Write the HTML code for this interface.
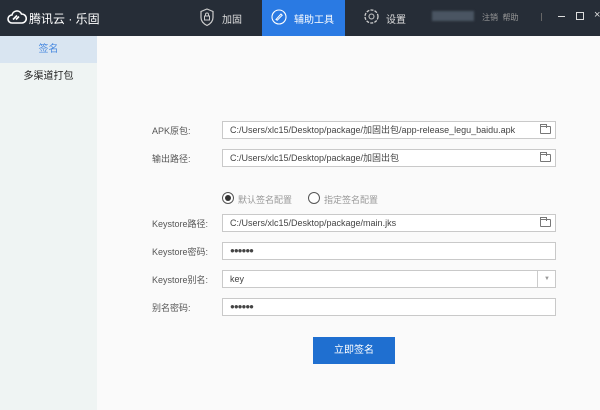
<!DOCTYPE html>
<html><head><meta charset="utf-8"><style>
*{margin:0;padding:0;box-sizing:border-box}
body{width:600px;height:410px;overflow:hidden;background:#fafafa;font-family:"Liberation Sans","Noto Sans CJK SC",sans-serif;position:relative}
.top{position:absolute;left:0;top:0;width:600px;height:36px;background:#262d37;color:#fff}
.a{position:absolute}
.side{position:absolute;left:0;top:36px;width:97px;height:374px;background:#eff4f3}
.lbl{position:absolute;left:152px;font-size:9px;color:#555}
.in{position:absolute;left:222px;width:334px;height:18px;border:1px solid #c9c9c9;background:#fff;font-size:9px;color:#444;padding-left:7px;line-height:16px}
.fold{position:absolute;right:4px;top:4px;width:11px;height:8px;border:1px solid #777;border-radius:1px}
.fold:before{content:"";position:absolute;left:-1px;top:-3px;width:5px;height:3px;border:1px solid #777;border-bottom:none}
</style></head><body>
<div class="top">
 <svg class="a" style="left:7px;top:10px" width="20" height="14" viewBox="0 0 20 14"><path d="M5 13a4 4 0 0 1 0-8a5 5 0 0 1 9.5-1a4.5 4.5 0 0 1 0.5 9z M6 9.5l4-4 M9 9.5l3-3" fill="none" stroke="#fff" stroke-width="1.6"/></svg>
 <div class="a" style="left:29px;top:10px;font-size:12px">腾讯云 · 乐固</div>
 <svg class="a" style="left:199px;top:8px" width="16" height="19" viewBox="0 0 16 19"><path d="M8 1l6 2.5v6c0 4-3 6.5-6 8c-3-1.5-6-4-6-8v-6z" fill="none" stroke="#ccc" stroke-width="1.2"/><rect x="5.5" y="8" width="5" height="4" fill="none" stroke="#ccc"/><path d="M6.5 8v-1.5a1.5 1.5 0 0 1 3 0v1.5" fill="none" stroke="#ccc"/></svg>
 <div class="a" style="left:222px;top:11px;font-size:10px;color:#ddd">加固</div>
 <div class="a" style="left:262px;top:0;width:83px;height:36px;background:#2a7ae3"></div>
 <svg class="a" style="left:271px;top:9px" width="16" height="16" viewBox="0 0 16 16"><circle cx="8" cy="8" r="7" fill="none" stroke="#fff" stroke-width="1.1"/><path d="M5 10.5l5-5.5 1.2 1.2-5 5z" fill="none" stroke="#fff"/></svg>
 <div class="a" style="left:294px;top:11px;font-size:10px">辅助工具</div>
 <svg class="a" style="left:363px;top:8px" width="17" height="17" viewBox="0 0 17 17"><circle cx="8.5" cy="8.5" r="6.5" fill="none" stroke="#ccc" stroke-width="1.3" stroke-dasharray="3 1.2"/><circle cx="8.5" cy="8.5" r="2.5" fill="none" stroke="#ccc"/></svg>
 <div class="a" style="left:386px;top:11px;font-size:10px;color:#ddd">设置</div>
 <div class="a" style="left:432px;top:11px;width:42px;height:10px;background:#4a5562;filter:blur(1px)"></div>
 <div class="a" style="left:482px;top:12px;font-size:8px;color:#999">注销 &nbsp;帮助</div>
 <div class="a" style="left:541px;top:13px;width:1px;height:8px;background:#666"></div>
 <div class="a" style="left:558px;top:16px;width:7px;height:1px;background:#ddd"></div>
 <div class="a" style="left:576px;top:12px;width:8px;height:8px;border:1px solid #ddd"></div>
 <div class="a" style="left:594px;top:9px;font-size:11px;color:#ddd">×</div>
</div>
<div class="side">
 <div class="a" style="left:0;top:0;width:97px;height:27px;background:#d9e5f1;color:#4a8ae0;font-size:10px;text-align:center;line-height:27px">签名</div>
 <div class="a" style="left:0;top:27px;width:97px;height:28px;color:#222;font-size:10px;text-align:center;line-height:28px">多渠道打包</div>
</div>
<div class="lbl" style="top:124px">APK原包:</div>
<div class="in" style="top:121px">C:/Users/xlc15/Desktop/package/加固出包/app-release_legu_baidu.apk<span class="fold"></span></div>
<div class="lbl" style="top:152px">输出路径:</div>
<div class="in" style="top:149px">C:/Users/xlc15/Desktop/package/加固出包<span class="fold"></span></div>
<div class="a" style="left:222px;top:192px;width:12px;height:12px;border:1px solid #555;border-radius:50%;background:#fff"><div style="margin:2px;width:6px;height:6px;border-radius:50%;background:#333"></div></div>
<div class="a" style="left:238px;top:193px;font-size:9px;color:#999">默认签名配置</div>
<div class="a" style="left:308px;top:192px;width:12px;height:12px;border:1px solid #555;border-radius:50%;background:#fff"></div>
<div class="a" style="left:324px;top:193px;font-size:9px;color:#999">指定签名配置</div>
<div class="lbl" style="top:217px">Keystore路径:</div>
<div class="in" style="top:214px">C:/Users/xlc15/Desktop/package/main.jks<span class="fold"></span></div>
<div class="lbl" style="top:245px">Keystore密码:</div>
<div class="in" style="top:242px;font-size:8px;letter-spacing:-1px">●●●●●●</div>
<div class="lbl" style="top:273px">Keystore别名:</div>
<div class="in" style="top:270px">key<span style="position:absolute;right:17px;top:0;width:1px;height:16px;background:#ccc"></span><span style="position:absolute;right:5px;top:0;font-size:6px;color:#999">▼</span></div>
<div class="lbl" style="top:301px">别名密码:</div>
<div class="in" style="top:298px;font-size:8px;letter-spacing:-1px">●●●●●●</div>
<div class="a" style="left:313px;top:337px;width:82px;height:27px;background:#1f6fd0;color:#fff;font-size:10px;text-align:center;line-height:27px">立即签名</div>
</body></html>
